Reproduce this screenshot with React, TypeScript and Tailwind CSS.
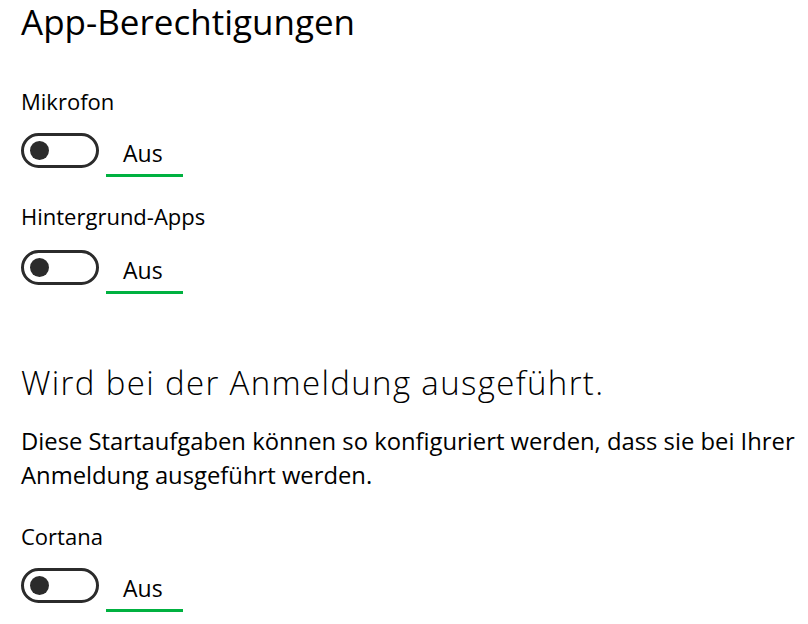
import React from "react";

function Toggle({ className = "" }: { className?: string }) {
  return (
    <div className={`flex items-start ${className}`}>
      <div className="flex h-[35px] w-[78px] items-center rounded-full border-[3px] border-[#2b2b2b] pl-[6px]">
        <div className="h-[19px] w-[19px] rounded-full bg-[#2b2b2b]" />
      </div>
      <div className="ml-[7px] mt-[5px] w-[77px] border-b-[3px] border-[#00b140] pb-[6px] pl-[17px] text-[23px] leading-[30px]">
        Aus
      </div>
    </div>
  );
}

export default function App() {
  return (
    <div className="min-h-[624px] bg-white pl-[21px] pt-[2px] text-black [font-family:'Open_Sans',sans-serif]">
      <h1 className="text-[35px] leading-[40px]">App-Berechtigungen</h1>

      <div className="mt-[44px] text-[22px] leading-[30px]">Mikrofon</div>
      <Toggle className="mt-[17px]" />

      <div className="mt-[24px] text-[22px] leading-[30px]">Hintergrund-Apps</div>
      <Toggle className="mt-[19px]" />

      <h2 className="mt-[69px] whitespace-nowrap text-[33px] font-[350] leading-[40px] tracking-[1.35px]">
        Wird bei der Anmeldung ausgeführt.
      </h2>
      <p className="mt-[21px] whitespace-nowrap text-[23.8px] leading-[34px]">
        Diese Startaufgaben können so konfiguriert werden, dass sie bei Ihrer
        <br />
        Anmeldung ausgeführt werden.
      </p>

      <div className="mt-[29px] text-[22px] leading-[30px]">Cortana</div>
      <Toggle className="mt-[17px]" />
    </div>
  );
}
